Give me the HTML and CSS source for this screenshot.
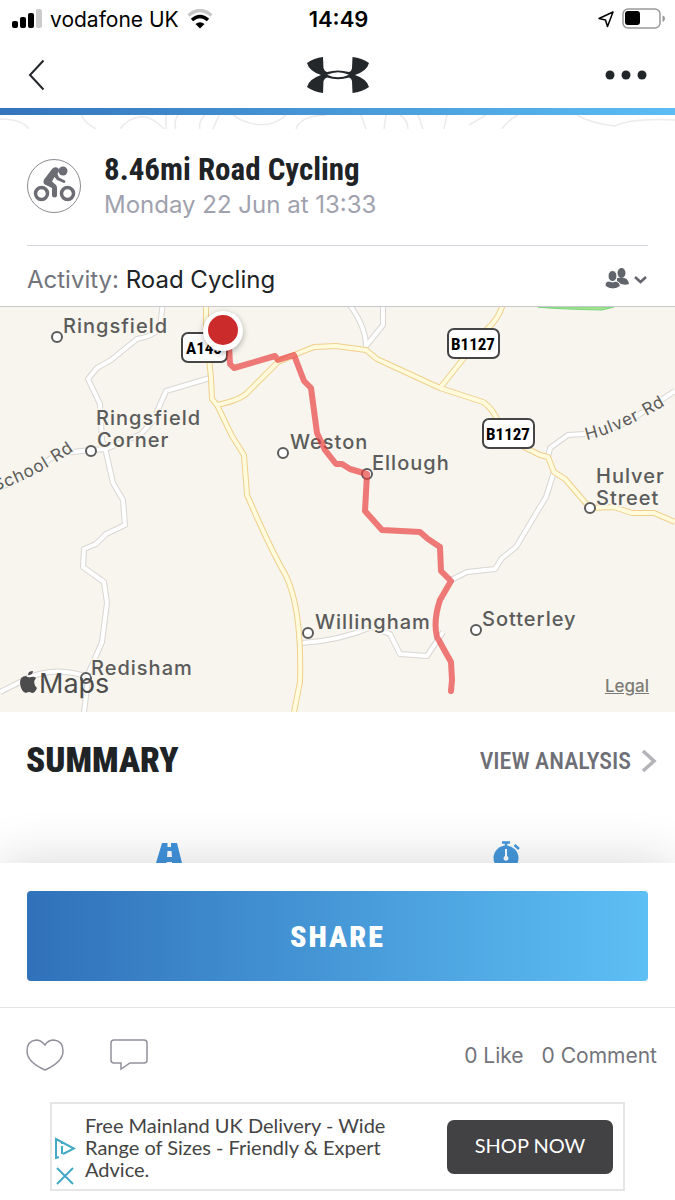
FILE: index.html
```html
<!DOCTYPE html>
<html lang="en">
<head>
<meta charset="utf-8">
<meta name="viewport" content="width=device-width, initial-scale=1">
<title>8.46mi Road Cycling</title>
<link rel="stylesheet" href="styles.css">
</head>
<body>
<div class="status">
  <div class="status-side">
    <svg width="30" height="20" viewBox="0 0 30 20" aria-hidden="true"><rect x="0" y="12" width="6" height="7" rx="2"/><rect x="8" y="8" width="6" height="11" rx="2"/><rect x="16" y="4" width="6" height="15" rx="2"/><rect x="24" y="0" width="6" height="19" rx="2" fill="#ccc"/></svg>
    <span class="carrier">vodafone UK</span>
    <svg width="26" height="20" viewBox="0 0 26 20" fill="none" aria-hidden="true"><path d="M1.500 6.500Q13-3.500 24.500 6.500" stroke="#c8c8c8" stroke-width="3.500"/><path d="M5 11Q13 4 21 11" stroke="#000" stroke-width="3.500"/><path d="M8.500 15Q13 11.500 17.500 15L13 19.500Z" fill="#000"/></svg>
  </div>
  <span class="clock">14:49</span>
  <div class="status-side status-end">
    <svg width="16" height="17" viewBox="0 0 16 17" fill="none" stroke="#000" stroke-width="1.500" stroke-linejoin="round" aria-hidden="true"><path d="M15 1L1 7.500L7.500 9L9.500 15.500Z"/></svg>
    <svg width="43" height="22" viewBox="0 0 43 22" aria-hidden="true"><rect x="1" y="1" width="37" height="19" rx="5" fill="none" stroke="#999" stroke-width="1.500"/><rect x="3" y="3" width="15" height="14" rx="3"/><path d="M40.500 7.500Q43 8 43 10.500T40.500 14Z" fill="#999"/></svg>
  </div>
</div>
<header class="nav">
  <button class="icon-btn" aria-label="Back"><svg width="17" height="32" viewBox="0 0 17 32" fill="none" stroke="#222529" stroke-width="2"><path d="M15.500 1.500L2 16L15.500 30.500"/></svg></button>
  <svg class="logo" width="64" height="38" viewBox="0 0 64 38" aria-hidden="true"><path fill="#24282b" fill-rule="evenodd" d="M17 1L17.500 12Q18.500 15.500 21 16Q32 13 43 16Q45.500 15.500 46 12L46.500 1Q56 2 63 7Q61 15 49 19Q61 23 63 31Q56 36 46.500 37L46 25Q45.500 22 43 21.500Q32 24.800 21 21.500Q18.500 22 17.500 25L17 37Q8 36 1 31Q3 23 15 19Q3 15 1 7Q8 2 17 1ZM21 18.800Q32 23.800 43 18.800Q32 13.800 21 18.800Z"/></svg>
  <button class="icon-btn nav-more" aria-label="More options"><svg width="42" height="10" viewBox="0 0 42 10" fill="#222529"><circle cx="5" cy="5" r="4.500"/><circle cx="21" cy="5" r="4.500"/><circle cx="37" cy="5" r="4.500"/></svg></button>
</header>
<main class="workout">
  <svg class="contours" viewBox="0 0 675 14" preserveAspectRatio="none" fill="none" stroke="#eceaec" stroke-width="1.500" aria-hidden="true"><path d="M0 4Q22 4 29 14M81 0Q85 8 96 14M120 14Q127 4 139 2Q151 0 164 14M166 0V14M178 0Q173 8 176 14M205 0Q198 7 200 14M219 0L213 14M233 0Q249 12 269 9Q280 6 286 0M296 14Q300 1 326 0M361 0L366 14M386 0L384 14M400 0Q408 5 408 14M418 0L423 14M447 0L444 14M486 0L469 10M518 0Q508 5 502 14M577 0Q590 8 615 11Q631 3 675 5"/></svg>
  <section class="intro">
    <svg width="56" height="56" viewBox="0 0 56 56" fill="none" aria-hidden="true"><circle cx="28" cy="28" r="26.500" stroke="#8b8b92"/><g stroke="#6c6d74" stroke-width="3.500"><circle cx="15.500" cy="35.500" r="6"/><circle cx="41.500" cy="35.500" r="6"/></g><path fill="#6c6d74" d="M17.500 23Q18 21 20 19L26 11Q28 8.500 31 9.500Q34 11 32.500 14L31.500 16L33 19.500L39 22.500Q40 24.500 38 25L31 22L28.500 19L26 23.500L30 27Q31 28 31 30V37Q31 39.500 28.500 39.500T26 37V30L20 27Q17 26 17.500 23Z"/><circle cx="37" cy="13" r="4.500" fill="#6c6d74"/></svg>
    <div>
      <h1 class="title">8.46mi Road Cycling</h1>
      <p class="date">Monday 22 Jun at 13:33</p>
    </div>
  </section>
  <div class="activity">
    <p class="activity-text"><span class="muted">Activity:</span> Road Cycling</p>
    <button class="icon-btn" aria-label="Privacy: friends"><svg width="44" height="24" viewBox="0 0 44 24" fill="#62646b"><ellipse cx="17.500" cy="6" rx="4" ry="5"/><path d="M13 11Q24 9 25 17Q19 19 13 15Z"/><g stroke="#fff" stroke-width="1"><ellipse cx="8.500" cy="9" rx="4.500" ry="5.500"/><path d="M1 19Q1 14 5 14Q9 16 12 14Q16 15 16.500 19Q9 25 1 19Z"/></g><path d="M31 10L36.500 15L42 10" fill="none" stroke="#62646b" stroke-width="2.500"/></svg></button>
  </div>
  <section class="map" aria-label="Route map">
    <svg class="map-art" viewBox="0 307 675 405" preserveAspectRatio="xMidYMid slice">
      <defs>
        <g id="lanes"><path d="M163 300L160 329Q150 337 137 339L111 360L97 368L88 379L100 404L102 440L106 452L113 483L123 500L125 525L106 534L96 544L84 549L83 567L104 582L107 603L102 642L89 672L84 712M210 378L166 391L153 421L141 434L106 449L91 450L64 453Q50 456 40 468L0 488M0 692L28 678Q56 665 91 678M346 300Q366 325 366 346M383 300V325L366 346M675 391L640 414Q610 434 585 434L568 435L550 448L548 457M554 472L546 497L516 547L502 558L495 569L467 572L451 580M302 643Q338 641 372 627L390 634L400 654L427 656L443 632"/></g>
        <g id="roads"><path d="M206 300L206 330L211 378L212 399L217 405L232 436L244 455L247 495L259 522Q272 551 286 576Q302 609 300 682L294 712M217 405Q241 400 248 392L278 362L294 355L314 347L336 346L366 350L377 359L440 388L483 402Q494 409 500 426L524 447L540 455L548 457L554 472L565 479L590 508L614 507L632 513L654 513L675 522M504 300Q500 318 487 329L440 388"/></g>
      </defs>
      <rect y="307" width="675" height="405" class="land"/>
      <path d="M538 307Q555 309 602 310L614 307Z" class="park"/>
      <use href="#lanes" class="lane-edge"/><use href="#lanes" class="lane"/>
      <use href="#roads" class="road-edge"/><use href="#roads" class="road"/>
      <g class="place-dot"><circle cx="57" cy="337" r="5"/><circle cx="91" cy="451" r="5"/><circle cx="283" cy="453" r="5"/><circle cx="367" cy="474" r="5"/><circle cx="590" cy="508" r="5"/><circle cx="308" cy="633" r="5"/><circle cx="476" cy="630" r="5"/><circle cx="86" cy="678" r="5"/></g>
      <g class="place"><text x="63" y="333">Ringsfield</text><text x="96" y="425">Ringsfield</text><text x="97" y="447">Corner</text><text x="290" y="449">Weston</text><text x="372" y="470">Ellough</text><text x="596" y="483">Hulver</text><text x="596" y="505">Street</text><text x="315" y="629">Willingham</text><text x="482" y="626">Sotterley</text><text x="91" y="675">Redisham</text></g>
      <path id="school-path" d="M-5 491Q34 479 76 449" fill="none"/><path id="hulver-path" d="M587 440Q622 432 672 401" fill="none"/>
      <g class="street"><text><textPath href="#school-path">School Rd</textPath></text><text><textPath href="#hulver-path">Hulver Rd</textPath></text></g>
      <g class="shield"><rect x="182" y="333" width="45" height="29" rx="6"/><rect x="448" y="329" width="51" height="29" rx="6"/><rect x="483" y="419" width="51" height="29" rx="6"/></g>
      <g class="shield-text"><text x="204" y="354">A145</text><text x="473" y="350">B1127</text><text x="508" y="440">B1127</text></g>
      <path class="route" d="M229 346L230 364L234 368L275 356L278 360L294 355L304 381L311 388L317 433L325 450L336 464L342 464L350 469L367 474L365 511L382 530L420 532L428 539L440 547L441 571L451 581L440 600Q433 621 437 637L451 662L452 680L451 691"/>
      <circle cx="223" cy="331" r="20" class="marker"/><circle cx="223" cy="330" r="15" fill="#cb2b2b"/>
      <g fill="#4c4c4c"><path d="M36 678Q34 676 31 677Q28 678 26 676Q20 676 20 683Q21 692 26 693Q29 691 32 693Q35 693 37 688Q32 683 36 678ZM28 675Q28 671 33 671Q33 675 28 675Z"/><text x="39" y="693" class="maps-word">Maps</text></g>
    </svg>
    <a class="legal" href="#">Legal</a>
  </section>
  <section class="summary">
    <div class="summary-head">
      <h2 class="summary-title">SUMMARY</h2>
      <a class="analysis" href="#">VIEW ANALYSIS<svg width="16" height="24" viewBox="0 0 16 24" fill="none" stroke="#b3b3b8" stroke-width="3.500" aria-hidden="true"><path d="M2 2L13 12L2 22"/></svg></a>
    </div>
    <div class="stats" aria-hidden="true">
      <svg width="30" height="21" viewBox="0 0 30 21"><path fill="#4193dc" fill-rule="evenodd" d="M8 1H23L28 21H2ZM13.500 1V5H17V1ZM13.500 9L13 15H18L17.500 9ZM12.500 20H18V21H12.500Z"/></svg>
      <svg width="30" height="22" viewBox="0 0 30 22"><circle cx="15" cy="17" r="12.500" fill="#4698dc"/><path d="M11 1.500H19M15 1V6M23.500 4L28 8" fill="none" stroke="#4698dc" stroke-width="2.500"/><path d="M14 8H16V15A2.500 2.500 0 1 1 14 15Z" fill="#fff"/></svg>
    </div>
  </section>
</main>
<footer class="sheet">
  <div class="share-wrap"><button class="share">SHARE</button></div>
  <div class="social">
    <button class="icon-btn" aria-label="Like"><svg width="38" height="34" viewBox="0 0 38 34" fill="none" stroke="#90919c" stroke-width="1.500"><path d="M19 7Q15 2 10 2Q1 3 1 13Q1 24 19 32Q37 24 37 13Q37 3 28 2Q22 2 19 7Z"/></svg></button>
    <button class="icon-btn comment-btn" aria-label="Comment"><svg width="38" height="34" viewBox="0 0 38 34" fill="none" stroke="#90919c" stroke-width="1.500"><path d="M4 2H34Q37 2 37 5V22Q37 25 34 25H20L11 31V25H4Q1 25 1 22V5Q1 2 4 2Z"/></svg></button>
    <a class="count" href="#">0 Like</a><a class="count" href="#">0 Comment</a>
  </div>
  <aside class="ad">
    <div class="ad-marks">
      <button class="icon-btn" aria-label="About this ad"><svg width="22" height="22" viewBox="0 0 22 22" fill="none" stroke="#43a9c4" stroke-width="2"><path d="M5 20L2 21V2L20 11.500L9 17M8 9V17M8 5V7"/></svg></button>
      <button class="icon-btn" aria-label="Close ad"><svg width="22" height="20" viewBox="0 0 22 20" stroke="#43a9c4" stroke-width="2"><path d="M3 2L19 18M19 2L3 18"/></svg></button>
    </div>
    <p class="ad-text">Free Mainland UK Delivery - Wide Range of Sizes - Friendly &amp; Expert Advice.</p>
    <button class="shop">SHOP NOW</button>
  </aside>
</footer>
</body>
</html>
```
FILE: styles.css
```css
* { box-sizing: border-box; }
body {
  margin: 0;
  min-height: 100vh;
  display: flex;
  flex-direction: column;
  background: #fff;
  color: #202326;
  font-family: Inter, "Liberation Sans", sans-serif;
}
h1, h2, p { margin: 0; }
a { color: inherit; text-decoration: none; }
svg { display: block; flex: none; }
button { font: inherit; border: 0; cursor: pointer; }
.icon-btn { display: flex; padding: 0; background: none; }

.status { display: flex; align-items: center; height: 38px; padding: 0 10px 0 12px; color: #000; }
.status-side { flex: 1; display: flex; align-items: center; gap: 8px; }
.status-end { justify-content: flex-end; }
.carrier { font-size: 21px; white-space: nowrap; }
.clock { font-size: 22px; font-weight: 600; }

.nav { display: grid; grid-template-columns: 1fr auto 1fr; align-items: center; height: 77px; padding: 4px 28px 0; border-bottom: 7px solid; border-image: linear-gradient(90deg, #3474bd, #5bbdf3) 1; }
.nav-more { justify-self: end; }

.workout { flex: 1; display: flex; flex-direction: column; }
.contours { width: 100%; height: 14px; }
.intro { display: flex; align-items: center; gap: 22px; margin: 0 27px; padding: 22px 0 24px; border-bottom: 1px solid #d4d5de; }
.intro > svg { margin-left: -1px; }
.title { font: bold 31px/38px "Roboto Condensed", "Liberation Sans Narrow", sans-serif; }
.date { font-size: 24px; line-height: 32px; color: #a0a1ae; }
.activity { display: flex; align-items: center; justify-content: space-between; height: 61px; padding: 6px 27px 0; border-bottom: 1px solid #c8c9cc; }
.activity-text { font-size: 24px; }
.muted { color: #73747c; }

.map { position: relative; background: #f7f5ed; }
.map-art { width: 100%; height: auto; }
.land { fill: #f7f5ed; }
.park { fill: #a9e48f; stroke: #75d47a; }
.lane-edge, .lane, .road-edge, .road, .route { fill: none; stroke-linejoin: round; }
.lane-edge { stroke: #d9d6d4; stroke-width: 6px; }
.lane { stroke: #fff; stroke-width: 4px; }
.road-edge { stroke: #f0cf8c; stroke-width: 6px; }
.road { stroke: #fffbdc; stroke-width: 4px; }
.route { stroke: #e93c3c; stroke-width: 6px; stroke-opacity: .68; stroke-linecap: round; }
.marker { fill: #fff; filter: drop-shadow(0 2px 3px rgba(0, 0, 0, .3)); }
.place-dot { fill: #fff; stroke: #5b5b5b; stroke-width: 2px; }
.place, .street { fill: #5b5b5b; stroke: #f7f5ed; stroke-width: 3px; paint-order: stroke; letter-spacing: 1px; }
.place { font-size: 20px; font-weight: 500; }
.street { font-size: 17px; }
.shield { fill: #fff; stroke: #454545; stroke-width: 2px; }
.shield-text { font: bold 17px "Roboto Condensed", "Liberation Sans Narrow", sans-serif; text-anchor: middle; }
.maps-word { font-size: 27px; }
.legal { position: absolute; right: 26px; bottom: 16px; font-size: 17px; font-weight: 500; line-height: 20px; color: #7c7b77; text-decoration: underline; }

.summary { flex: 1; display: flex; flex-direction: column; justify-content: space-between; }
.summary-head { display: flex; align-items: center; justify-content: space-between; padding: 29px 18px 0 26px; }
.summary-title { font: 900 35px/40px "Roboto Condensed", Roboto, sans-serif; }
.analysis { display: flex; align-items: center; gap: 10px; font: 500 24px/40px "Roboto Condensed", "Liberation Sans Narrow", sans-serif; color: #6e6f76; }
.stats { display: grid; grid-template-columns: 1fr 1fr; justify-items: center; align-items: end; }

.sheet { background: #fff; box-shadow: 0 0 50px rgba(0, 0, 0, .16); }
.share-wrap { padding: 28px 27px 26px; border-bottom: 1px solid #e4e4e6; }
.share { display: block; width: 100%; height: 90px; border-radius: 4px; background: linear-gradient(90deg, #3071ba, #5dbff4); color: #fff; font: 900 30px "Roboto Condensed", Roboto, sans-serif; letter-spacing: 2px; }
.social { display: flex; align-items: center; height: 94px; padding: 0 18px 0 26px; }
.comment-btn { margin: 0 auto 0 46px; }
.count { font-size: 21px; color: #73747b; }
.count + .count { margin-left: 18px; }
.ad { display: flex; align-items: center; margin: 0 50px 9px; height: 89px; padding-right: 10px; border: 2px solid #e6e6e7; }
.ad-marks { display: flex; flex-direction: column; gap: 7px; align-self: flex-end; margin: 0 9px 3px 2px; }
.ad-text { flex: 1; padding-right: 30px; font: 20px/22px Lato, sans-serif; color: #444; }
.shop { width: 166px; height: 54px; padding-bottom: 4px; border-radius: 7px; background: #424143; color: #fff; font: 20px Lato, sans-serif; }
```
